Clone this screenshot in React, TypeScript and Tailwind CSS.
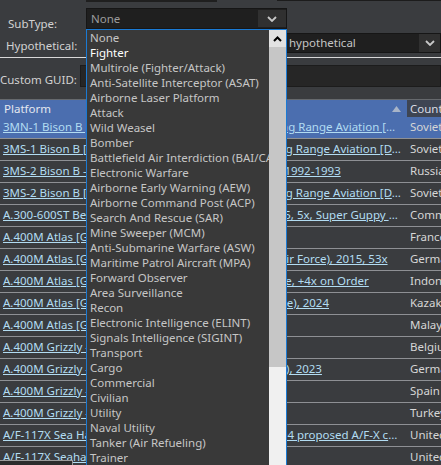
import React from 'react';

/* ---------- data ---------------------------------------------- */
const subTypes = [
  'None',
  'Fighter',
  'Multirole (Fighter/Attack)',
  'Anti-Satellite Interceptor (ASAT)',
  'Airborne Laser Platform',
  'Attack',
  'Wild Weasel',
  'Bomber',
  'Battlefield  Air  Interdiction (BAI/CAS)',
  'Electronic Warfare',
  'Airborne Early Warning (AEW)',
  'Airborne Command Post (ACP)',
  'Search And Rescue (SAR)',
  'Mine Sweeper (MCM)',
  'Anti-Submarine Warfare (ASW)',
  'Maritime Patrol Aircraft (MPA)',
  'Forward Observer',
  'Area Surveillance',
  'Recon',
  'Electronic Intelligence (ELINT)',
  'Signals Intelligence (SIGINT)',
  'Transport',
  'Cargo',
  'Commercial',
  'Civilian',
  'Utility',
  'Naval Utility',
  'Tanker (Air Refueling)',
  'Trainer',
];

const platforms = [
  { name: '3MN-1 Bison B [Myasishchev 3M] - (USSR - Soviet Long Range Aviation [DA]), 1958-1991', country: 'Soviet Union' },
  { name: '3MS-1 Bison B [Myasishchev 3M] - (USSR - Soviet Long Range Aviation [DA]), 1960-1991', country: 'Soviet Union' },
  { name: '3MS-2 Bison B - (Russia - Long Range Aviation [DA]), 1992-1993', country: 'Russia' },
  { name: '3MS-2 Bison B [Myasishchev 3M] - (USSR - Soviet Long Range Aviation [DA]), 1960-1991', country: 'Soviet Union' },
  { name: 'A.300-600ST Beluga - (Commercial - Airbus SAS), 1995, 5x, Super Guppy Replacement', country: 'Commercial' },
  { name: 'A.400M Atlas [Grizzly] - (France), 2013', country: 'France' },
  { name: 'A.400M Atlas [Grizzly] - (Germany - Luftwaffe LTG 6 Air Force), 2015, 53x', country: 'Germany' },
  { name: 'A.400M Atlas [Grizzly] - (Indonesia - TNI-AU), 2x Active, +4x on Order', country: 'Indonesia' },
  { name: 'A.400M Atlas [Grizzly] - (Kazakhstan - Kazakh Air Force), 2024', country: 'Kazakhstan' },
  { name: 'A.400M Atlas [Grizzly] - (Malaysia), 2015', country: 'Malaysia' },
  { name: 'A.400M Grizzly - (Belgium), 2020', country: 'Belgium' },
  { name: 'A.400M Grizzly - (Germany - Luftwaffe - Air Transport), 2023', country: 'Germany' },
  { name: 'A.400M Grizzly - (Spain), 2016', country: 'Spain' },
  { name: 'A.400M Grizzly - (Turkey), 2014', country: 'Turkey' },
  { name: 'A/F-117X Sea Hawk - (United States - Navy), 1993-1994 proposed A/F-X carrier aircraft', country: 'United States' },
  { name: 'A/F-117X Seahawk - (United States - Navy), 1993', country: 'United States' },
];

/* ---------- small pieces ---------------------------------------- */
function ChevronDown() {
  return (
    <svg width="10" height="6" viewBox="0 0 10 6" className="block">
      <polyline points="1,1 5,5 9,1" fill="none" stroke="#c8c8c8" strokeWidth="1.8" />
    </svg>
  );
}

function ChevronUp() {
  return (
    <svg width="9" height="6" viewBox="0 0 9 6" className="block">
      <polyline points="1,5 4.5,1.5 8,5" fill="none" stroke="#000" strokeWidth="2" />
    </svg>
  );
}

/* ---------- page ------------------------------------------------ */
export default function App() {
  return (
    <div className="relative w-[441px] h-[465px] overflow-hidden bg-[#3a3c3f] font-['Noto_Sans',sans-serif] text-[11.5px] text-[#d2d2d2]">
      {/* remains of the field above */}
      <div className="flex h-[3px]">
        <div className="ml-[86px] w-[131px] h-[2px] bg-[#1f1f1f]" />
        <div className="ml-[60px] flex-1 h-px bg-[#1c1c1c]" />
      </div>

      {/* SubType */}
      <div className="mt-[5px] flex h-[21px]">
        <span className="w-[86px] pl-2 pt-[5px] leading-[21px]">SubType:</span>
        <div className="w-[201px] flex bg-[#1f1f1f] border border-[#161616]">
          <span className="flex-1 pl-1 leading-[19px] text-[#9c9c9c]">None</span>
          <div className="w-[28px] my-px bg-[#303030] flex items-center justify-center">
            <ChevronDown />
          </div>
        </div>
      </div>

      {/* Hypothetical */}
      <div className="mt-[4px] flex h-[20px]">
        <span className="w-[86px] pl-[6px] pt-[3px] leading-[20px]">Hypothetical:</span>
        <div className="flex-1 flex bg-[#1f1f1f] border border-[#161616]">
          <span className="flex-1 pl-[202px] leading-[18px] text-[#c4c4c4]">hypothetical</span>
          <div className="w-[21px] bg-[#303030] flex items-center justify-center">
            <ChevronDown />
          </div>
        </div>
      </div>

      <div className="mt-[4px] h-px bg-[#d8d8d8]" />

      {/* Custom GUID */}
      <div className="mt-[7px] flex h-[22px]">
        <span className="w-[80px] pt-[4px] leading-[22px] whitespace-nowrap">Custom GUID:</span>
        <div className="flex-1 bg-[#262626] border border-[#1c1c1c]" />
      </div>

      <div className="mt-[12px] h-px bg-[#66696d]" />

      {/* table header */}
      <div className="flex h-[17px] bg-[#4b6eaf]">
        <div className="flex-1 flex items-center pl-1 pr-[6px]">
          <span className="flex-1 text-[#e4e8f0]">Platform</span>
          <svg width="9" height="6" viewBox="0 0 9 6">
            <polygon points="0,6 4.5,0 9,6" fill="#a8b4c8" />
          </svg>
        </div>
        <div className="w-[34px] bg-[#3e4553] pl-[3px] leading-[17px] whitespace-nowrap overflow-hidden text-[#d8dce4]">
          Country
        </div>
      </div>

      {/* table rows */}
      {platforms.map((r, i) => (
        <div
          key={i}
          className={`flex h-[22px] border-b border-[#8e9094] ${i === 0 ? 'bg-[#4b6eaf]' : ''}`}
        >
          <div className="w-[407px] pl-[3px] pr-[5px] leading-[20px] overflow-hidden whitespace-nowrap text-ellipsis underline text-[#b2dcf2]">
            {r.name}
          </div>
          <div className="flex-1 pl-[3px] leading-[20px] overflow-hidden whitespace-nowrap text-[#d6d6d6]">
            {r.country}
          </div>
        </div>
      ))}

      {/* bottom-left scroll box */}
      <div className="absolute left-0 bottom-0 w-[73px] h-[5px] bg-[#2c2c2c] border-t border-r border-[#9c9c9c]" />

      {/* open SubType dropdown */}
      <div className="absolute left-[86px] top-[29px] w-[201px] h-[450px] flex bg-[#393939] border border-[#1a7ad4]">
        <div className="flex-1 overflow-hidden">
          {subTypes.map((s, i) => (
            <div
              key={s}
              className={`h-[15px] leading-[15px] pl-[3px] whitespace-nowrap ${i === 1 ? 'text-white' : 'text-[#c6c6c6]'}`}
            >
              {s}
            </div>
          ))}
        </div>
        <div className="w-[17px] flex flex-col">
          <div className="h-[17px] bg-[#e2e2e2] flex items-center justify-center">
            <ChevronUp />
          </div>
          <div className="h-[320px] bg-[#c6c6c6]" />
          <div className="flex-1 bg-[#f0f0f0]" />
        </div>
      </div>
    </div>
  );
}
